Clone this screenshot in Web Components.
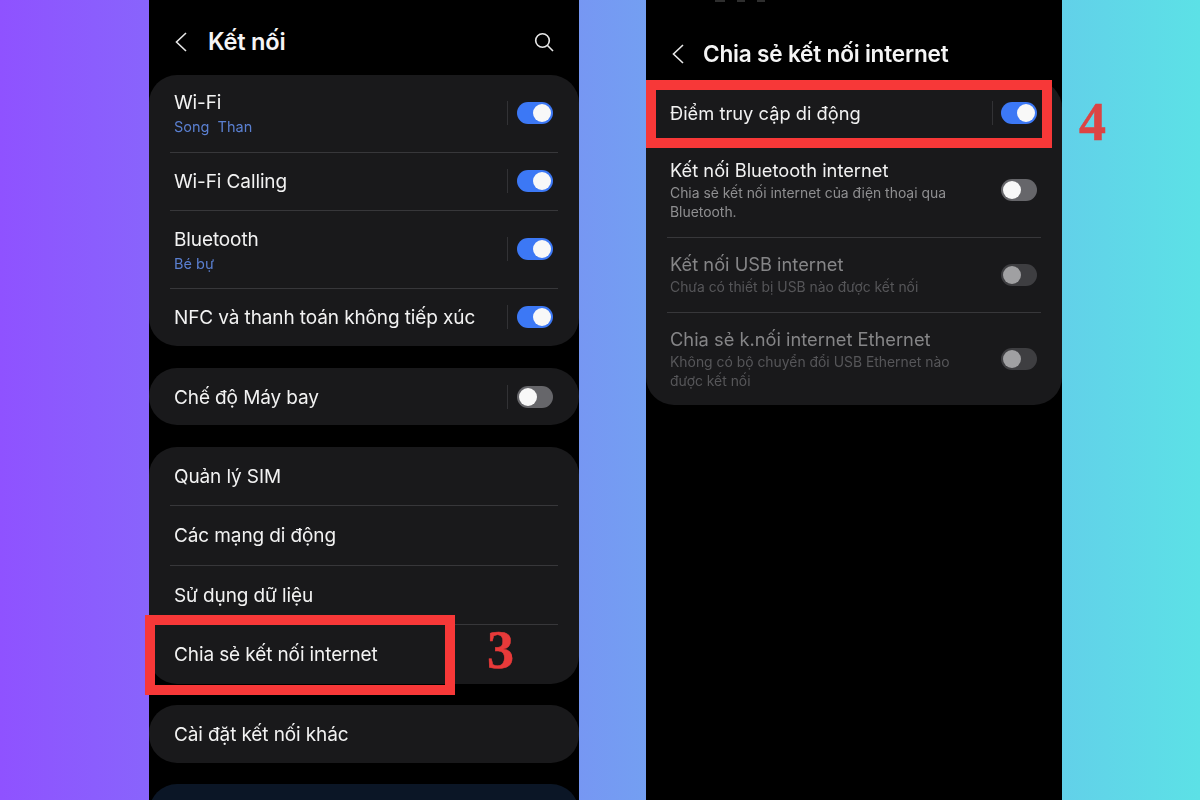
<!DOCTYPE html>
<html lang="vi"><head><meta charset="utf-8"><title>Chia sẻ kết nối internet</title>
<style>
html,body{margin:0;padding:0;width:1200px;height:800px;overflow:hidden}
body{font-family:Inter,"Noto Sans",sans-serif}
</style></head><body>
<guide-stage>
  <phone-screen style="--w:430px;--ml:149px">
    <app-bar title="Kết nối" search></app-bar>
    <settings-card>
      <setting-row h="77" pb="2" label="Wi-Fi" sub="Song  Than" accent toggle="on" divider></setting-row>
      <setting-row h="58" label="Wi-Fi Calling" toggle="on" divider></setting-row>
      <setting-row h="78" label="Bluetooth" sub="Bé bự" accent toggle="on" divider></setting-row>
      <setting-row h="58" label="NFC và thanh toán không tiếp xúc" toggle="on" divider></setting-row>
    </settings-card>
    <settings-card gap="22">
      <setting-row h="57" label="Chế độ Máy bay" toggle="off" divider></setting-row>
    </settings-card>
    <settings-card gap="22">
      <setting-row h="58" label="Quản lý SIM"></setting-row>
      <setting-row h="60" label="Các mạng di động"></setting-row>
      <setting-row h="59" label="Sử dụng dữ liệu"></setting-row>
      <setting-row h="60" label="Chia sẻ kết nối internet"></setting-row>
    </settings-card>
    <settings-card gap="21">
      <setting-row h="58" label="Cài đặt kết nối khác"></setting-row>
    </settings-card>
    <settings-card gap="21" tone="navy">
      <setting-row h="60" label=""></setting-row>
    </settings-card>
  </phone-screen>
  <phone-screen style="--w:416px;--ml:67px">
    <status-remnant></status-remnant>
    <app-bar title="Chia sẻ kết nối internet" compact></app-bar>
    <settings-card>
      <setting-row compact h="67" pb="2" label="Điểm truy cập di động" toggle="on" divider></setting-row>
      <setting-row compact h="90" pb="5" label="Kết nối Bluetooth internet" sub="Chia sẻ kết nối internet của điện thoại qua Bluetooth." toggle="off"></setting-row>
      <setting-row compact h="75" label="Kết nối USB internet" sub="Chưa có thiết bị USB nào được kết nối" toggle="off" disabled></setting-row>
      <setting-row compact h="93" label="Chia sẻ k.nối internet Ethernet" sub="Không có bộ chuyển đổi USB Ethernet nào được kết nối" toggle="off" disabled></setting-row>
    </settings-card>
  </phone-screen>
  <red-mark style="left:145px;top:615px;width:310px;height:80px"></red-mark>
  <red-mark style="left:646px;top:80px;width:406px;height:68px"></red-mark>
  <step-number style="left:487px;top:622px">3</step-number>
  <step-number style="left:1079px;top:94px;color:#dc4444">4</step-number>
</guide-stage>
<script>
const def=(name,css,html,extra)=>{
  customElements.define(name,class extends HTMLElement{
    connectedCallback(){
      if(this.shadowRoot)return;
      const r=this.attachShadow({mode:'open'});
      r.innerHTML=`<style>${css}</style>`+(typeof html==='function'?html(this):html);
      if(extra)extra(this,r);
    }
  });
};
const esc=s=>(s||'').replace(/&/g,'&amp;').replace(/</g,'&lt;');
def('guide-stage',`:host{display:flex;position:relative;width:1200px;height:800px;overflow:hidden;background:linear-gradient(90deg,#8f52ff 0%,#5ce1e6 100%)}`,`<slot></slot>`);
def('phone-screen',`:host{display:block;position:relative;flex:none;width:var(--w);margin-left:var(--ml);height:800px;background:#000;color:#f4f4f4;filter:blur(.3px)}`,`<slot></slot>`);
def('status-remnant',`:host{display:flex;position:absolute;left:69px;top:0;gap:12px}
i{display:block;height:2px;background:#2e2e2e}`,`<i style="width:10px"></i><i style="width:8px"></i><i style="width:8px"></i>`);
def('app-bar',`:host{display:flex;align-items:center;box-sizing:border-box;height:75px;padding:9px 25px 0 24px;color:#f5f5f5}
:host([compact]){height:80px;padding:27px 0 0 24px}
svg{flex:none;display:block}
h1{margin:0 0 0 19px;font:600 23.6px/30px Inter,sans-serif;letter-spacing:-.2px;flex:1}
:host([compact]) h1{margin-left:17px;font-size:22.6px}
`,e=>`<svg width="16" height="22" viewBox="0 0 16 22" fill="none" stroke="#e8e8e8" stroke-width="1.6"><path d="M13 2 3.500 11l9.500 9"/></svg><h1>${esc(e.getAttribute('title'))}</h1>${e.hasAttribute('search')?'<svg width="20" height="20" viewBox="0 0 20 20" fill="none" stroke="#e8e8e8" stroke-width="1.6"><circle cx="8.500" cy="8.500" r="6.800"/><path d="m13.500 13.500 5.500 5.500"/></svg>':''}`);
def('settings-card',`:host{display:block;background:#19191b;border-radius:28px;overflow:hidden}`,`<slot></slot>`,e=>{
  e.style.marginTop=(e.getAttribute('gap')||0)+'px';
  if(e.getAttribute('tone')==='navy')e.style.background='#0b1626';
});
def('setting-row',`:host{display:block;position:relative;box-sizing:border-box;padding:0 26px 0 25px}
.in{height:100%;display:flex;align-items:center}
.txt{flex:1;min-width:0;padding-top:2px}
.l{font:400 19px/24px Inter,sans-serif;letter-spacing:-.11px;color:#f2f2f2;white-space:nowrap}
.s{font:400 14.500px/19px Inter,sans-serif;color:#8f8f91;margin-top:2px}
.s.a{color:#5a7fd0;white-space:pre}
:host([compact]){padding:0 25px 0 24px}
:host([compact]) .txt{padding-top:0}
:host([compact]) .l{font-size:18.300px;letter-spacing:0}
:host([compact]) .s{max-width:300px;font-size:13.900px;line-height:19px;margin-top:2px}
:host([disabled]) .l{color:#858587}
:host([disabled]) .s{color:#565659}
.rule{position:absolute;left:21px;right:21px;bottom:-1px;height:1px;background:#37373a}
.div{width:1px;height:24px;background:#323235;margin-right:9px}
:host([compact]) .div{margin-right:8px}
.t{flex:none;width:36px;height:22px;border-radius:11px;position:relative;background:#66666a}
.t i{position:absolute;top:2px;left:2px;width:18px;height:18px;border-radius:50%;background:#f8f8f8}
.t.on{background:#3c78f5}.t.on i{left:16px}
:host([disabled]) .t{background:#3e3e41}
:host([disabled]) .t i{background:#a0a0a2}
`,e=>{
  const t=e.getAttribute('toggle'),s=e.getAttribute('sub');
  e.style.height=e.getAttribute('h')+'px';
  if(e.getAttribute('pb'))e.style.paddingBottom=e.getAttribute('pb')+'px';
  return `<div class="in"><div class="txt"><div class="l">${esc(e.getAttribute('label'))}</div>${s?`<div class="s${e.hasAttribute('accent')?' a':''}">${esc(s)}</div>`:''}</div>${e.hasAttribute('divider')?'<div class="div"></div>':''}${t?`<div class="t ${t}"><i></i></div>`:''}</div>${e.nextElementSibling?'<div class="rule"></div>':''}`;
});
def('red-mark',`:host{display:block;position:absolute;box-sizing:border-box;border:10px solid #f73838}`,``);
def('step-number',`:host{display:block;position:absolute;font:700 54px/56px "Liberation Serif",serif;color:#e83a3a;-webkit-text-stroke:.5px currentColor}`,`<slot></slot>`);
</script>
</body></html>
